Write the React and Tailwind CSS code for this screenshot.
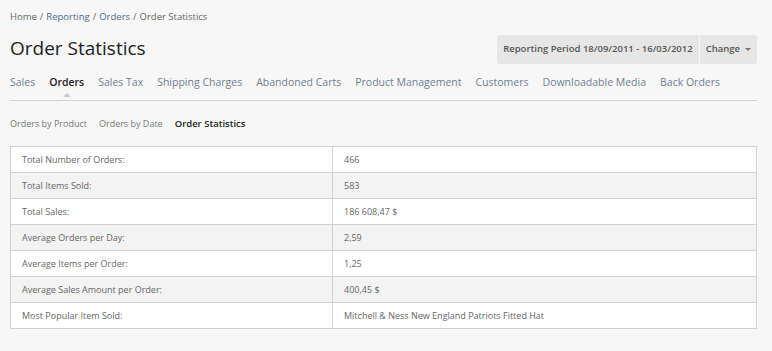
import React from 'react';

const TABS = ['Sales', 'Orders', 'Sales Tax', 'Shipping Charges', 'Abandoned Carts', 'Product Management', 'Customers', 'Downloadable Media', 'Back Orders'];
const SUBTABS = ['Orders by Product', 'Orders by Date', 'Order Statistics'];

const ROWS = [
  ['Total Number of Orders:', '466'],
  ['Total Items Sold:', '583'],
  ['Total Sales:', '186 608,47 $'],
  ['Average Orders per Day:', '2,59'],
  ['Average Items per Order:', '1,25'],
  ['Average Sales Amount per Order:', '400,45 $'],
  ['Most Popular Item Sold:', 'Mitchell & Ness New England Patriots Fitted Hat'],
];

export default function App() {
  return (
    <div className="min-h-[351px] bg-[#f7f7f7] pl-[10px] pr-[15px] pt-[11px] pb-6 text-[#555] font-['Open_Sans',sans-serif]">
      {/* breadcrumb */}
      <div className="text-[9.5px] leading-[12px] text-[#666]">
        <span>Home</span>
        <span className="mx-[3px]">/</span>
        <span className="text-[#4d6a86]">Reporting</span>
        <span className="mx-[3px]">/</span>
        <span className="text-[#4d6a86]">Orders</span>
        <span className="mx-[3px]">/</span>
        <span>Order Statistics</span>
      </div>

      <div className="flex items-start justify-between">
        <h1 className="mt-[13px] text-[19px] leading-[24px] text-[#222]">Order Statistics</h1>
        <div className="mt-[12px] flex h-[29px] rounded-[3px] bg-[#e6e6e6] text-[9.5px] font-semibold text-[#555]">
          <div className="flex items-center pl-[6px] pr-[6px] border-r border-[#f5f5f5]">
            Reporting Period 18/09/2011 - 16/03/2012
          </div>
          <div className="flex items-center gap-[5px] px-[6px]">
            Change
            <span className="block h-0 w-0 border-x-[3px] border-t-[3px] border-x-transparent border-t-[#777]" />
          </div>
        </div>
      </div>

      {/* tabs */}
      <div className="mt-[10px] flex gap-[14px] whitespace-nowrap border-b border-[#d4d4d4] pb-[10px] text-[10.5px] leading-[16px]">
        {TABS.map((t) => (
          <div key={t} className={`relative ${t === 'Orders' ? 'font-semibold text-[#222]' : 'text-[#6f7f8f]'}`}>
            {t}
            {t === 'Orders' && (
              <span className="absolute left-1/2 top-[19px] -ml-[4px] h-0 w-0 border-x-[4px] border-b-[4px] border-x-transparent border-b-[#ccc]" />
            )}
          </div>
        ))}
      </div>

      {/* sub tabs */}
      <div className="mt-[17px] flex gap-[12px] whitespace-nowrap text-[9px] leading-[12px]">
        {SUBTABS.map((t) => (
          <span key={t} className={t === 'Order Statistics' ? 'text-[9.5px] font-semibold text-[#222]' : 'text-[#777]'}>{t}</span>
        ))}
      </div>

      <table className="mt-[16px] w-full border-collapse border border-[#d0d0d0] text-[9px] text-[#666]">
        <tbody>
          {ROWS.map(([k, v], i) => (
            <tr key={k} className={i % 2 ? 'bg-[#f3f3f3]' : 'bg-white'}>
              <td className="h-[26px] w-[322px] border border-[#d0d0d0] px-[11px]">{k}</td>
              <td className="h-[26px] border border-[#d0d0d0] px-[11px]">{v}</td>
            </tr>
          ))}
        </tbody>
      </table>
    </div>
  );
}
